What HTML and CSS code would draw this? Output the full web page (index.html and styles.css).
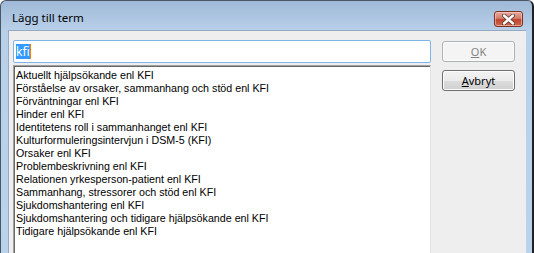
FILE: index.html
```html
<!DOCTYPE html>
<html lang="sv">
<head>
    <meta charset="UTF-8">
    <link rel="stylesheet" href="styles.css">
    <title>Lägg till term</title>
</head>
<body>

    <div class="window">
        <div class="titlebar">
            <span class="title">Lägg till term</span>
            <button class="close" type="button" aria-label="Stäng">
                <svg width="15" height="11" viewBox="0 0 15 11">
                    <path d="M3 1.5 L12 9.5 M12 1.5 L3 9.5" stroke="#5a3a36" stroke-width="4" stroke-linecap="round"/>
                    <path d="M3 1.5 L12 9.5 M12 1.5 L3 9.5" stroke="#ffffff" stroke-width="2.4" stroke-linecap="round"/>
                </svg>
            </button>
        </div>

        <div class="client">
            <div class="main">
                <div class="term-input"><span class="selected">kfi</span><span class="caret"></span></div>
                <ul class="term-list">
                    <li>Aktuellt hjälpsökande enl KFI</li>
                    <li>Förståelse av orsaker, sammanhang och stöd enl KFI</li>
                    <li>Förväntningar enl KFI</li>
                    <li>Hinder enl KFI</li>
                    <li>Identitetens roll i sammanhanget enl KFI</li>
                    <li>Kulturformuleringsintervjun i DSM-5 (KFI)</li>
                    <li>Orsaker enl KFI</li>
                    <li>Problembeskrivning enl KFI</li>
                    <li>Relationen yrkesperson-patient enl KFI</li>
                    <li>Sammanhang, stressorer och stöd enl KFI</li>
                    <li>Sjukdomshantering enl KFI</li>
                    <li>Sjukdomshantering och tidigare hjälpsökande enl KFI</li>
                    <li>Tidigare hjälpsökande enl KFI</li>
                </ul>
            </div>
            <div class="buttons">
                <button type="button" class="btn" disabled><u>O</u>K</button>
                <button type="button" class="btn"><u>A</u>vbryt</button>
            </div>
        </div>
    </div>

</body>
</html>
```

FILE: styles.css
```css
* {
    box-sizing: border-box;
}

body {
    margin: 0;
    overflow: hidden;
    background-color: #ffffff;
}

.window {
    width: 534px;
    height: 253px;
    display: flex;
    flex-direction: column;
    border: 1px solid #4a5565;
    border-right: 2px solid #1e2228;
    border-bottom: none;
    border-radius: 6px 6px 0 0;
    background: linear-gradient(#9fb9d6, #b9d0e9 30px, #bad2ea);
    padding: 0 6px 0 7px;
}

.titlebar {
    height: 29px;
    flex-shrink: 0;
    display: flex;
    align-items: flex-start;
    justify-content: space-between;
}

.title {
    font-family: "Noto Sans", sans-serif;
    font-size: 11.5px;
    color: #000;
    margin: 9px 0 0 4px;
}

.close {
    width: 29px;
    height: 16px;
    margin: 10px 3px 0 0;
    padding: 0;
    border: 1px solid #7d3227;
    border-radius: 3px;
    background: linear-gradient(#e7a99b, #d67d6a 45%, #c0442d 55%, #cf6a4e);
    box-shadow: inset 0 0 0 1px rgba(255, 220, 210, 0.5);
    display: flex;
    align-items: center;
    justify-content: center;
}

.client {
    flex: 1;
    display: flex;
    gap: 11px;
    background-color: #eeeeee;
    border-top: 1px solid #95a9c0;
    border-left: 1px solid #95a9c0;
    padding: 9px 0 0 4px;
}

.main {
    width: 418px;
    display: flex;
    flex-direction: column;
    gap: 2px;
}

.term-input {
    height: 23px;
    flex-shrink: 0;
    border: 1px solid #7eb4ea;
    border-radius: 2px;
    background-color: #fff;
    display: flex;
    align-items: center;
    padding-left: 2px;
    font-family: "Noto Sans", sans-serif;
    font-size: 12px;
}

.selected {
    background-color: #3399ff;
    color: #fff;
    line-height: 15px;
}

.caret {
    width: 1px;
    height: 15px;
    background-color: #ff8000;
}

.term-list {
    flex: 1;
    margin: 0;
    padding: 3px 0 0 2px;
    list-style: none;
    background-color: #fff;
    border-top: 1px solid #a0a0a0;
    border-left: 1px solid #a0a0a0;
    border-right: 1px solid #e3e3e3;
    box-shadow: inset 1px 1px 0 #696969;
    font-family: "Liberation Sans", Arial, sans-serif;
    font-size: 10.7px;
    line-height: 13px;
    color: #000;
}

.buttons {
    display: flex;
    flex-direction: column;
    gap: 8px;
    padding-top: 1px;
}

.btn {
    width: 73px;
    height: 21px;
    padding: 0;
    border: 1px solid #707070;
    border-radius: 3px;
    background: linear-gradient(#f2f2f2, #ebebeb 50%, #dddddd 50%, #cfcfcf);
    box-shadow: inset 0 0 0 1px #fcfcfc;
    font-family: "Noto Sans", sans-serif;
    font-size: 11px;
    color: #000;
}

.btn:disabled {
    border-color: #adb2b5;
    background: #f4f4f4;
    color: #838383;
}
```
